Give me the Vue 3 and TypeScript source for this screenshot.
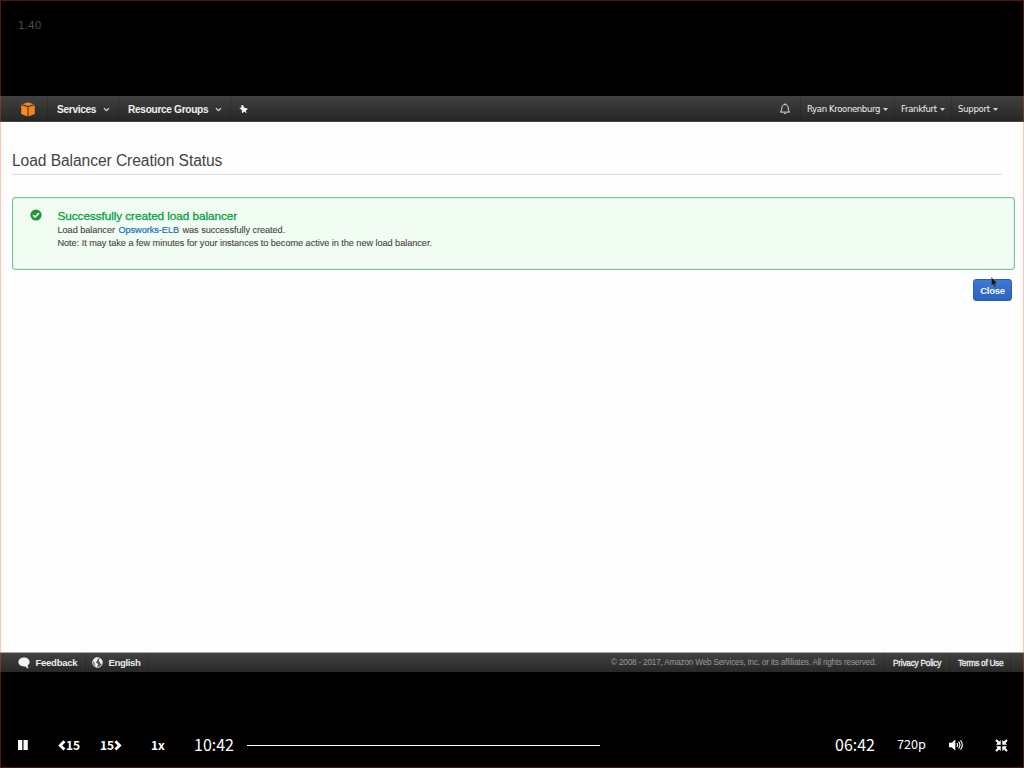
<script setup lang="ts">
interface MenuItem {
  label: string
  cls: string
}
const mainMenu: MenuItem[] = [
  { label: 'Services', cls: 'services' },
  { label: 'Resource Groups', cls: 'groups' },
]
const accountMenu: MenuItem[] = [
  { label: 'Ryan Kroonenburg', cls: 'user' },
  { label: 'Frankfurt', cls: 'region' },
  { label: 'Support', cls: 'support' },
]
</script>

<template>
  <div class="player">
    <div class="top"><span class="speed">1.40</span></div>

    <div class="screen">
      <header class="nav">
        <div class="cell logo">
          <svg width="14" height="15" viewBox="0 0 14 15">
            <path d="M1 2.2 7 .3l6 1.9-6 1.9z" fill="#e8862c" />
            <path d="M.2 3.2 6.5 5v9.6L.2 12z" fill="#fb8a1c" />
            <path d="M13.8 3.2 7.5 5v9.6l6.3-2.6z" fill="#f5831a" />
          </svg>
        </div>
        <div v-for="m in mainMenu" :key="m.label" class="cell" :class="m.cls">
          <span class="label">{{ m.label }}</span>
          <svg class="chev" width="7" height="5" viewBox="0 0 7 5"><path d="M1 1.2 3.5 3.6 6 1.2" fill="none" stroke="#d5d5d5" stroke-width="1.3" /></svg>
        </div>
        <div class="cell pin">
          <svg width="9" height="9" viewBox="0 0 9 9"><path d="M2.600.1 4.200.2l.6 2 1.900 1 1.700.1.100 1.300-1.700.9.800 2.900L5.300 6.500 3.400 8.300 2.800 7l.2-2.100L.3 3.500l1.800-1z" fill="#f4f4f4" /></svg>
        </div>
        <div class="cell bell">
          <svg width="12" height="12" viewBox="0 0 12 12">
            <path d="M6 .4v1M1.300 9.100c1.500-1.300 1.300-2.500 1.500-4.200C3 2.700 4.100 1.500 6 1.500s3 1.200 3.200 3.400c.2 1.700 0 2.900 1.500 4.200z" fill="none" stroke="#ddd" stroke-width="1" stroke-linejoin="round" />
            <path d="M4.600 10.100h2.800L6 11.300z" fill="#ddd" />
          </svg>
        </div>
        <div v-for="m in accountMenu" :key="m.label" class="cell account" :class="m.cls">
          <span class="label">{{ m.label }}</span>
          <svg class="caret" width="5" height="3" viewBox="0 0 5 3"><path d="M0 0h5L2.500 3z" fill="#d0d0d0" /></svg>
        </div>
      </header>

      <main class="content">
        <h1>Load Balancer Creation Status</h1>
        <section class="notice">
          <svg class="check" width="12" height="12" viewBox="0 0 12 12">
            <circle cx="6" cy="6" r="5.600" fill="#1f9535" />
            <path d="M3.100 6.100 5.200 8.100 8.900 4.200" fill="none" stroke="#e9fbe9" stroke-width="1.700" />
          </svg>
          <div class="message">
            <h2>Successfully created load balancer</h2>
            <p class="created">Load balancer <a>Opsworks-ELB</a> was successfully created.</p>
            <p class="note">Note: It may take a few minutes for your instances to become active in the new load balancer.</p>
          </div>
        </section>
        <div class="actions">
          <button type="button">Close</button>
          <svg class="pointer" width="7" height="11" viewBox="0 0 7 11"><path d="M.5.5v8l1.800-1.400 1.200 3 1.300-.6L3.600 6.600l2.600-.2z" fill="#111" stroke="#777" stroke-width=".4" /></svg>
        </div>
      </main>

      <footer class="foot">
        <div class="cell feedback">
          <svg width="12" height="12" viewBox="0 0 12 12"><path d="M6 .6c3.200 0 5.600 1.900 5.600 4.500 0 1.500-.8 2.700-2 3.500 0 1 .5 1.900 1.200 2.700-1.600-.2-2.600-.9-3.300-1.900C3.500 9.900.4 8 .4 5.100.4 2.500 2.800.6 6 .6z" fill="#f2f2f2" /></svg>
          <span class="label">Feedback</span>
        </div>
        <div class="cell english">
          <svg width="11" height="11" viewBox="0 0 11 11">
            <circle cx="5.500" cy="5.500" r="4.800" fill="#555" stroke="#eee" stroke-width="1" />
            <path d="M1 3.500 3.200 1l2.600-.2.500 1.300-1.400.8.300 1.200L3.700 5.500l1.500.8 1 1.300-1.600 2.700L3 8.500 2.600 6.300zM7.300 2l1.700.3 1.200 2.300-.6 2.600-1.500-1-.3-1.500-1.100-.8z" fill="#f2f2f2" />
          </svg>
          <span class="label">English</span>
        </div>
        <div class="cell copy"><span class="label">© 2008 - 2017, Amazon Web Services, Inc. or its affiliates. All rights reserved.</span></div>
        <div class="cell privacy"><span class="label">Privacy Policy</span></div>
        <div class="cell terms"><span class="label">Terms of Use</span></div>
        <div class="cell end"></div>
      </footer>
    </div>

    <div class="controls">
      <div class="c pause"><svg width="10" height="10" viewBox="0 0 10 10"><path d="M0 0h4.300v10H0zM5.500 0h4.300v10H5.500z" fill="#fff" /></svg></div>
      <div class="c back">
        <svg width="8" height="11" viewBox="0 0 8 11"><path d="M6.400 1.200 2.200 5.400l4.200 4.200" fill="none" stroke="#fff" stroke-width="2.800" /></svg>
        <b>15</b>
      </div>
      <div class="c forward">
        <b>15</b>
        <svg width="8" height="11" viewBox="0 0 8 11"><path d="M1.400 1.200 5.600 5.400 1.400 9.600" fill="none" stroke="#fff" stroke-width="2.800" /></svg>
      </div>
      <div class="c rate"><b>1x</b></div>
      <div class="c elapsed">10:42</div>
      <div class="track"></div>
      <div class="c remaining">06:42</div>
      <div class="c quality">720p</div>
      <div class="c volume">
        <svg width="15" height="12" viewBox="0 0 15 12">
          <path d="M0 3.700h2.600L6.300.6v10.800L2.600 8.300H0z" fill="#fff" />
          <path d="M7.800 4.100q1.500 1.900 0 3.800M9.600 2.700q2.600 3.300 0 6.600M11.500 1.400q3.700 4.600 0 9.200" fill="none" stroke="#fff" stroke-width="1.150" />
        </svg>
      </div>
      <div class="c shrink">
        <svg width="13" height="13" viewBox="0 0 13 13">
          <path d="M5.700 5.700H.9L2.500 4.100.3 1.700 1.700.3l2.400 2.200L5.700.9zM7.300 5.700V.9l1.600 1.600L11.300.3l1.400 1.400-2.200 2.400 1.600 1.600zM5.700 7.300v4.800l-1.600-1.600-2.400 2.200L.3 11.300l2.200-2.400L.9 7.300zM7.300 7.300h4.800l-1.600 1.600 2.200 2.400-1.400 1.400-2.400-2.200-1.600 1.600z" fill="#fff" />
        </svg>
      </div>
    </div>
    <div class="frame"></div>
  </div>
</template>

<style>
body { margin: 0; background: #000; overflow: hidden; }
</style>

<style scoped>
* { box-sizing: border-box; }
.player { position: relative; width: 1024px; height: 768px; background: #000; display: flex; flex-direction: column; font-family: "Liberation Sans", Arial, sans-serif; overflow: hidden; white-space: nowrap; }
.frame { position: absolute; inset: 0; border: 1px solid rgba(255, 70, 30, 0.33); pointer-events: none; }
.top { height: 96px; flex: none; padding: 18px 0 0 18px; font-family: "DejaVu Sans", sans-serif; font-size: 10.600px; line-height: 14px; color: #4a4a4a; }
.screen { height: 576px; flex: none; display: flex; flex-direction: column; background: #fefefe; }
svg { display: block; flex: none; }
.nav { height: 26px; flex: none; display: flex; background: linear-gradient(#414041, #292829 90%, #242324 94%, #555 100%); color: #f0f0f0; font-size: 10.200px; font-weight: bold; letter-spacing: -0.350px; }
.cell { display: flex; align-items: center; border-right: 1px solid rgba(0, 0, 0, 0.13); height: 100%; }
.logo { width: 48px; padding-left: 21px; }
.services { width: 71px; padding-left: 9px; }
.groups { width: 112px; padding-left: 9px; }
.chev { margin-left: 7px; }
.pin { padding-left: 8px; border: 0; }
.bell { margin-left: auto; width: 23px; padding-left: 1px; }
.account { font-size: 8.500px; font-weight: normal; font-family: "DejaVu Sans", sans-serif; letter-spacing: -0.350px; }
.account .caret { margin-left: 3px; }
.user { width: 94px; padding-left: 6px; }
.region { width: 57px; padding-left: 6px; letter-spacing: -0.300px; }
.support { width: 72px; padding-left: 6px; border: 0; letter-spacing: -0.250px; }
.content { flex: 1; padding: 27px 9px 0 12px; }
h1 { margin: 0 13px 0 0; height: 26px; font-size: 15.600px; line-height: 23px; letter-spacing: -0.070px; font-weight: normal; color: #444; border-bottom: 1px solid #dcdcdc; }
.notice { margin-top: 22px; height: 73px; border: 1px solid #70c59b; box-shadow: inset 0 0 1px #55bb88; border-radius: 3px; background: #f1fdf3; display: flex; padding: 11px 0 0 17px; }
.message { margin-left: 15.500px; padding-top: 1px; color: #444; font-size: 9.200px; letter-spacing: -0.060px; -webkit-text-stroke: 0.100px #444; }
h2 { margin: 0; font-size: 11.800px; line-height: 12px; font-weight: normal; letter-spacing: -0.080px; color: #08a045; -webkit-text-stroke: 0.300px #08a045; }
p { margin: 0; line-height: 13.500px; }
.created { margin-top: 2px; }
.note { margin-top: -0.500px; }
a { color: #1672b8; margin: 0 1px; -webkit-text-stroke: 0.200px #1672b8; }
.actions { position: relative; display: flex; justify-content: flex-end; margin: 9px 3px 0 0; }
button { width: 39px; height: 22px; padding: 0; border: 1px solid #2860b5; border-radius: 3px; background: linear-gradient(#3c79d5, #2c63bd); color: #f2f7ff; font: bold 9.500px "Liberation Sans", Arial, sans-serif; letter-spacing: -0.250px; }
.pointer { position: absolute; right: 14px; top: -2px; }
.foot { height: 20px; flex: none; display: flex; border-top: 1px solid #aaa; background: linear-gradient(#434243, #292829); color: #eee; font-size: 9.500px; font-weight: bold; letter-spacing: -0.250px; }
.feedback { width: 86px; padding-left: 18px; }
.feedback .label, .english .label { margin-left: 5.500px; }
.english { width: 62px; padding-left: 6px; letter-spacing: -0.350px; }
.copy { margin-left: auto; width: 274px; font-size: 8.200px; font-weight: normal; letter-spacing: -0.190px; color: #999; }
.privacy { width: 65px; padding-left: 8px; font-size: 8.300px; font-weight: normal; -webkit-text-stroke: 0.300px #eee; }
.terms { width: 61px; padding-left: 8px; font-size: 8.300px; font-weight: normal; letter-spacing: -0.300px; -webkit-text-stroke: 0.300px #eee; }
.end { width: 13px; border: 0; }
.controls { height: 46px; margin-top: 50px; flex: none; display: flex; align-items: center; color: #fff; font-family: "Noto Sans CJK JP", "Noto Sans", sans-serif; font-size: 16px; line-height: 24px; }
.c { display: flex; align-items: center; flex: none; }
b { font-size: 12px; line-height: 16px; margin-bottom: 1px; }
.pause { width: 58px; padding-left: 18px; }
.back { width: 42px; }
.forward { width: 51px; }
.rate { width: 43px; }
.elapsed { width: 53px; padding-bottom: 2px; }
.track { width: 353px; height: 1px; background: #fff; }
.remaining { margin-left: 235px; width: 62px; padding-bottom: 2px; }
.quality { width: 52px; font-size: 12.700px; padding-bottom: 2px; }
.volume { width: 46px; }
</style>
